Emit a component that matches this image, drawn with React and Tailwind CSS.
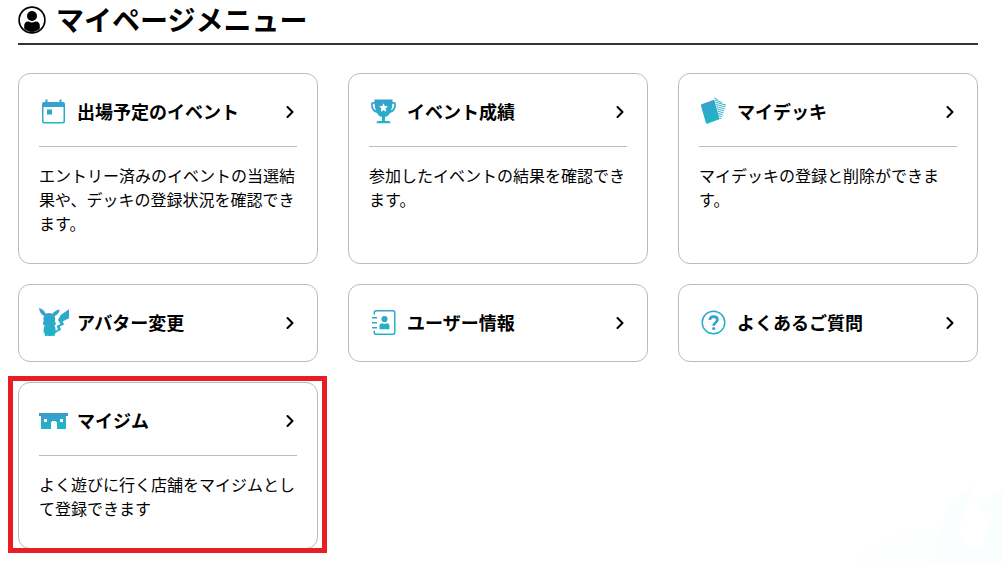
import { ChevronRight } from "lucide-react";

function Gradient({ id }) {
  return (
    <defs>
      <linearGradient id={id} x1="0" y1="0" x2="0.4" y2="1">
        <stop offset="0" stopColor="#3d9bd0" />
        <stop offset="1" stopColor="#1fb5c6" />
      </linearGradient>
    </defs>
  );
}

function UserIcon() {
  return (
    <svg viewBox="0 0 28 28" className="size-7 shrink-0" aria-hidden="true">
      <circle cx="14" cy="14" r="12.9" fill="none" stroke="#000" strokeWidth="1.7" />
      <circle cx="14" cy="10" r="5" />
      <path d="M6.200 22.500v-2.600c0-2.700 1.500-4.300 4-4.300h.6c1.900 1.200 4.500 1.200 6.400 0h.6c2.500 0 4 1.600 4 4.300v2.600C19.700 24.800 17 26 14 26s-5.700-1.200-7.800-3.500z" />
    </svg>
  );
}

function CalendarIcon() {
  return (
    <svg viewBox="0 0 30 30" className="size-[30px]" aria-hidden="true">
      <Gradient id="calendar" />
      <path
        fill="url(#calendar)"
        fillRule="evenodd"
        d="M6.500 2.500h2V5h12V2.500h2V5h1.500a2 2 0 0 1 2 2v17.500a2 2 0 0 1-2 2H5a2 2 0 0 1-2-2V7a2 2 0 0 1 2-2h1.500zM4.500 10v14a1 1 0 0 0 1 1h18a1 1 0 0 0 1-1V10zM8 12.500h5v5H8z"
      />
    </svg>
  );
}

function TrophyIcon() {
  return (
    <svg viewBox="0 0 30 30" className="size-[30px]" aria-hidden="true">
      <Gradient id="trophy" />
      <path
        fill="url(#trophy)"
        fillRule="evenodd"
        d="M5.500 2.500h18V5h1.500a2 2 0 0 1 2 2c0 5-2 8-6 9-1.200 2.200-2.800 3.500-5 4v4h3.500a2 2 0 0 1 2 2.200H7.500a2 2 0 0 1 2-2.200H13v-4c-2.200-.5-3.800-1.800-5-4-4-1-6-4-6-9a2 2 0 0 1 2-2h1.500zM3.600 6.700c.1 3.300 1.100 5.600 3.300 6.700-.7-2-1.200-4.200-1.300-6.700zM23.400 6.700c-.1 2.500-.6 4.700-1.300 6.700 2.200-1.100 3.200-3.400 3.300-6.700z"
      />
      <path fill="#fff" d="m14.500 6.200 1.300 2.900 3.100.4-2.300 2.100.6 3.100-2.700-1.500-2.700 1.500.6-3.100-2.300-2.100 3.100-.4z" />
    </svg>
  );
}

function DeckIcon() {
  return (
    <svg viewBox="0 0 30 30" className="size-[30px]" aria-hidden="true">
      <Gradient id="deck" />
      <path fill="url(#deck)" d="m2.500 7.300 11.800-4.200a1 1 0 0 1 1.300.7l4.800 17.600a1 1 0 0 1-.7 1.200L8.200 26.700a1 1 0 0 1-1.300-.7L1.900 8.500a1 1 0 0 1 .6-1.200z" />
      <path
        fill="none"
        stroke="#35b0c6"
        strokeWidth="1"
        d="m15.500 1 3 1.500M16 3l7 2.400M16.500 5.300l10.500 2.700M17.100 7.500l9.400 2.400M17.600 9.700l8.300 2.200M18.100 11.900l7.100 2M18.600 14.100l6 1.800M19.100 16.300l4.800 1.600M19.600 18.500l3.600 1.200M20.600 20.900l1.800.6"
      />
    </svg>
  );
}

function AvatarIcon() {
  return (
    <svg viewBox="0 0 30 30" className="size-[30px]" aria-hidden="true">
      <Gradient id="avatar" />
      <path
        fill="url(#avatar)"
        d="M0 0c3 .6 5.500 2.800 6.800 5.700 1.900-.9 4.600-.9 6.500 0C15.300 3.500 17.500 2 20.700 1.500c-.4 3-2.200 5.500-5.200 6.700.9 1.700 1 3.500.3 5.200.8.800 1.200 1.700 1 2.600-.2.800-.8 1.200-1.300 1.500.8 1.700 1.200 3.400 1.200 5.200l2.300-1.400-1.400-3.400 4-1.800-2.600-4.200L21.700 7l8.300-5.700v9l-6.500 3.200 1.700 3-4.500 2 1.400 3.200-5.400 3c-.2.800-.6 1.400-1.100 1.900l.3 1.400-2.600-.3c-1.600.3-3.200.3-4.800 0L5.600 28l.4-1.500c-1-1.300-1.400-2.600-1.400-4.200 0-1.800.4-3.300 1.100-4.800-1-.4-1.700-1-1.800-1.900-.1-.9.300-1.700.8-2.200-.6-1.900-.4-3.800.6-5.400C2.200 6.600.4 3.900 0 0z"
      />
    </svg>
  );
}

function AddressBookIcon() {
  return (
    <svg viewBox="0 0 30 30" className="size-[30px]" aria-hidden="true">
      <Gradient id="book" />
      <path
        fill="url(#book)"
        fillRule="evenodd"
        d="M7 2h17a2.500 2.500 0 0 1 2.500 2.500v20A2.500 2.500 0 0 1 24 27H7a2.500 2.500 0 0 1-2.500-2.500V22.500H6v1.800A1.200 1.200 0 0 0 7.200 25.500h16.600a1.200 1.200 0 0 0 1.200-1.200V4.700a1.200 1.200 0 0 0-1.200-1.200H7.200A1.200 1.200 0 0 0 6 4.700V6.500H4.500v-2A2.500 2.500 0 0 1 7 2zM3 9h5v1.500H3zM3 14h5v1.500H3zM3 19h5v1.500H3zM15.500 8a3.100 3.100 0 1 1 0 6.200 3.100 3.100 0 0 1 0-6.200zM10.500 21.200v-3.200c0-1.700 1-2.800 2.600-2.800 1.500.9 3.300.9 4.800 0 1.600 0 2.600 1.100 2.600 2.800v3.200z"
      />
    </svg>
  );
}

function QuestionIcon() {
  return (
    <svg viewBox="0 0 30 30" className="size-[30px]" aria-hidden="true">
      <Gradient id="question" />
      <circle cx="14.500" cy="14.500" r="11.300" fill="none" stroke="url(#question)" strokeWidth="1.500" />
      <path fill="none" stroke="#2fa5cb" strokeWidth="2.600" d="M10.800 12c.2-2.200 1.600-3.400 3.800-3.400 2.300 0 3.800 1.200 3.800 3.100 0 2.700-3.700 2.800-3.700 6" />
      <circle cx="14.700" cy="20.500" r="1.600" fill="#2aabca" />
    </svg>
  );
}

function GymIcon() {
  return (
    <svg viewBox="0 0 30 30" className="size-[30px]" aria-hidden="true">
      <Gradient id="gym" />
      <path fill="url(#gym)" fillRule="evenodd" d="M2 9h25v14h-9v-7h-1v-1h-4v1h-1v7H2zM5 13v3h3v-3zM21 13v3h3v-3z" />
      <path fill="#3d9bc8" d="M0 7h29v3H0z" />
    </svg>
  );
}

const menu = [
  {
    title: "出場予定のイベント",
    icon: CalendarIcon,
    text: "エントリー済みのイベントの当選結果や、デッキの登録状況を確認できます。",
  },
  { title: "イベント成績", icon: TrophyIcon, text: "参加したイベントの結果を確認できます。" },
  { title: "マイデッキ", icon: DeckIcon, text: "マイデッキの登録と削除ができます。" },
  { title: "アバター変更", icon: AvatarIcon },
  { title: "ユーザー情報", icon: AddressBookIcon },
  { title: "よくあるご質問", icon: QuestionIcon },
  { title: "マイジム", icon: GymIcon, text: "よく遊びに行く店舗をマイジムとして登録できます", highlighted: true },
];

function MenuCard({ title, icon: Icon, text, highlighted }) {
  return (
    <li className="relative flex">
      <a href="#" className="block w-full rounded-xl border border-[#bbb] bg-white px-5 py-5">
        <div className="flex h-9 items-center gap-2">
          <Icon />
          <h2 className="flex-1 pb-0.5 text-lg font-bold">{title}</h2>
          <ChevronRight className="-mr-[3px] size-5" strokeWidth={2.5} aria-hidden="true" />
        </div>
        {text && <p className="mt-4 border-t border-[#bbb] pt-4 pb-2 text-base">{text}</p>}
      </a>
      {highlighted && (
        <span className="pointer-events-none absolute -top-1.5 -right-[9px] -bottom-1 -left-2.5 border-5 border-[#e91d25]" />
      )}
    </li>
  );
}

export default function App() {
  return (
    <main className="relative pr-6 pb-6 pl-[18px] font-['Noto_Sans_CJK_JP','Noto_Sans',sans-serif] text-black" lang="ja">
      <header className="flex h-[45px] items-center gap-2.5 border-b-2 border-[#333] pb-1">
        <UserIcon />
        <h1 className="pb-0.5 text-[28px] leading-9 font-bold">マイページメニュー</h1>
      </header>
      <ul className="mt-7 grid grid-cols-3 gap-x-[30px] gap-y-5">
        {menu.map((item) => (
          <MenuCard key={item.title} {...item} />
        ))}
      </ul>
      <svg viewBox="0 0 150 84" className="absolute right-0 bottom-2 -z-10 w-[150px]" aria-hidden="true">
        <path fill="#fdfffe" d="M0 84c24-24 52-43 84-34l14 12-10 22z" />
        <path fill="#fbfeff" d="M78 84 96 26l10-12 16-10-8 24-8 22 8 16h18l4-28-12-14 26-16v76z" />
      </svg>
    </main>
  );
}
